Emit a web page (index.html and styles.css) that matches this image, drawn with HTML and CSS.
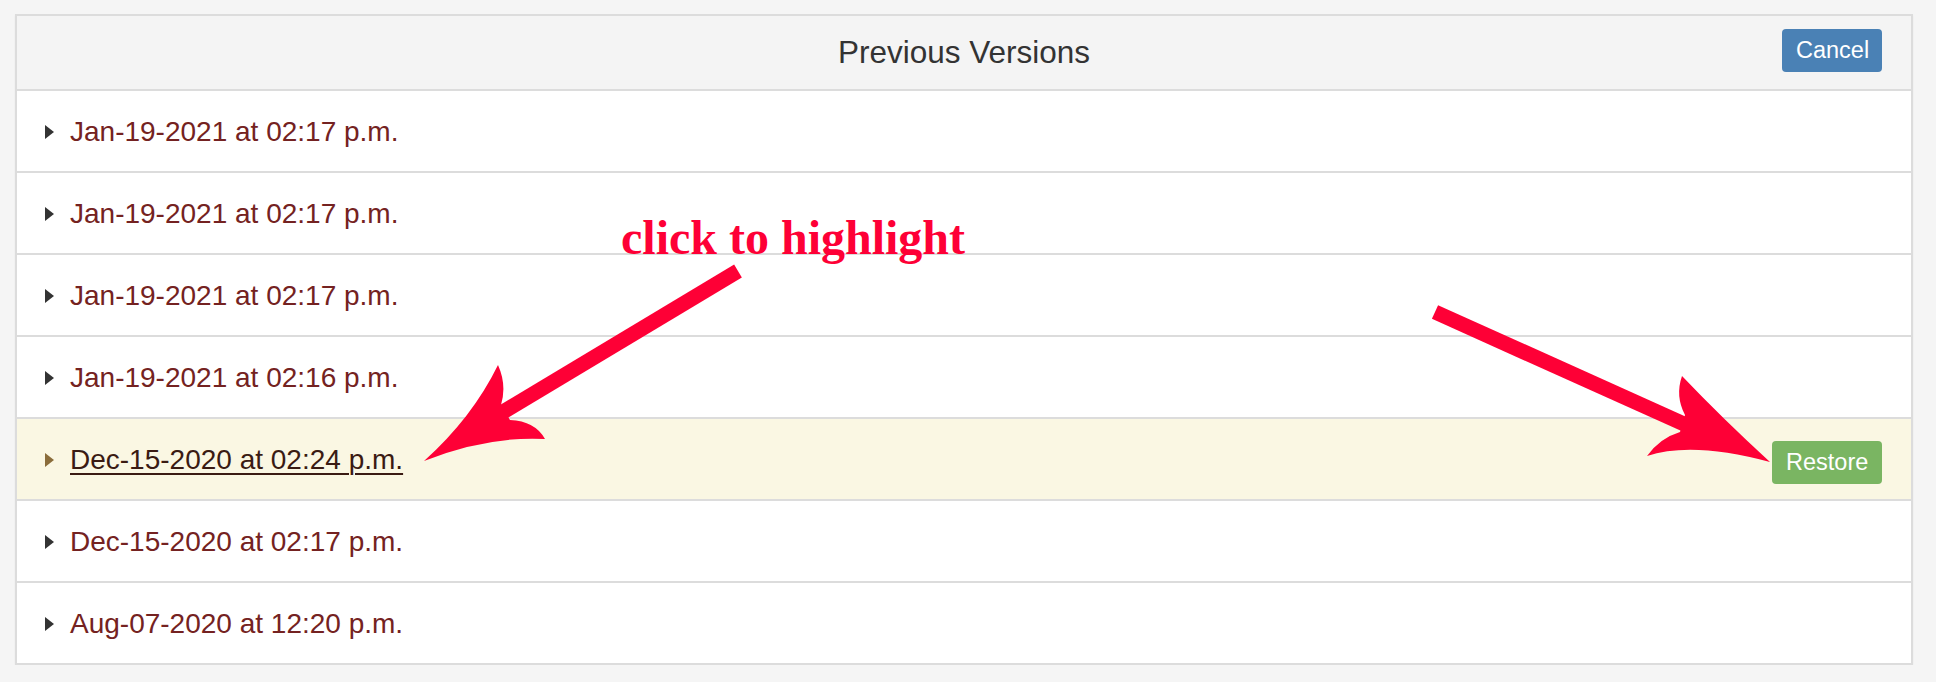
FILE: index.html
```html
<!DOCTYPE html>
<html lang="en">
  <head>
    <meta charset="UTF-8" />
    <title>Previous Versions</title>
    <link rel="stylesheet" href="styles.css">
  </head>
  <body>
    <!-- VERSIONS PANEL -->
    <div class="panel">
      <div class="panel-header">
        <h1>Previous Versions</h1>
        <button class="btn btn-cancel">Cancel</button>
      </div>
      <ul class="versions">
        <li class="version"><span class="caret"></span><a href="#">Jan-19-2021 at 02:17 p.m.</a></li>
        <li class="version"><span class="caret"></span><a href="#">Jan-19-2021 at 02:17 p.m.</a></li>
        <li class="version"><span class="caret"></span><a href="#">Jan-19-2021 at 02:17 p.m.</a></li>
        <li class="version"><span class="caret"></span><a href="#">Jan-19-2021 at 02:16 p.m.</a></li>
        <li class="version active">
          <span class="caret"></span><a href="#">Dec-15-2020 at 02:24 p.m.</a>
          <button class="btn btn-restore">Restore</button>
        </li>
        <li class="version"><span class="caret"></span><a href="#">Dec-15-2020 at 02:17 p.m.</a></li>
        <li class="version"><span class="caret"></span><a href="#">Aug-07-2020 at 12:20 p.m.</a></li>
      </ul>
    </div>

    <!-- ANNOTATIONS drawn over the panel -->
    <svg class="annotations" width="1936" height="682" viewBox="0 0 1936 682">
      <text class="note" x="621" y="254">click to highlight</text>
      <!-- left arrow -->
      <line x1="738" y1="271" x2="503" y2="412" stroke="#fe0036" stroke-width="15" />
      <path fill="#fe0036" d="M424 461 Q472 418 498 365 Q507 385 501 405 L510 420 Q535 421 545 439 Q486 436 424 461 Z" />
      <!-- right arrow -->
      <line x1="1435" y1="312" x2="1684" y2="424" stroke="#fe0036" stroke-width="15" />
      <path fill="#fe0036" d="M1770 462 Q1722 418 1682 376 Q1675 396 1685 415 L1680 432 Q1660 438 1647 456 Q1692 441 1770 462 Z" />
    </svg>
  </body>
</html>
```

FILE: styles.css
```css
/* Global */
* {
  box-sizing: border-box;
}
body {
  margin: 0;
  padding: 14px 23px 0 15px;
  background: #f5f5f5;
  font-family: "Liberation Sans", Arial, sans-serif;
  color: #333;
}

/* PANEL */
.panel {
  background: #fff;
  border: 2px solid #dcdcdc;
  box-shadow: 0 1px 2px rgba(0, 0, 0, 0.05);
}
.panel-header {
  position: relative;
  display: flex;
  align-items: center;
  justify-content: center;
  height: 75px;
  background: #f4f4f4;
  border-bottom: 2px solid #dcdcdc;
}
.panel-header h1 {
  margin: 0;
  font-size: 31.5px;
  font-weight: normal;
  color: #333;
}

/* BUTTONS */
.btn {
  border: none;
  border-radius: 4px;
  color: #fff;
  font-family: inherit;
  font-size: 23.5px;
  height: 43px;
  line-height: 43px;
  padding: 0 14px;
  cursor: pointer;
}
.btn-cancel {
  position: absolute;
  right: 29px;
  top: 13px;
  width: 100px;
  background: #4a81b5;
}
.btn-restore {
  margin-left: auto;
  margin-top: 6px;
  width: 110px;
  background: #7ab562;
}

/* VERSION LIST */
.versions {
  list-style: none;
  margin: 0;
  padding: 0;
}
.version {
  display: flex;
  align-items: center;
  height: 82px;
  padding: 0 29px 0 28px;
  border-bottom: 2px solid #dcdcdc;
}
.version:last-child {
  border-bottom: none;
  height: 80px;
}
.version a {
  font-size: 28px;
  color: #742221;
  text-decoration: none;
  margin-top: 2px;
}
.caret {
  width: 0;
  height: 0;
  border-left: 9px solid #333;
  border-top: 7.5px solid transparent;
  border-bottom: 7.5px solid transparent;
  margin: 2px 16px 0 0;
}
.version.active {
  background: #faf7e3;
}
.version.active .caret {
  border-left-color: #8a6d3b;
}
.version.active a {
  color: #3a1b13;
  text-decoration: underline;
  text-decoration-thickness: 2px;
  text-underline-offset: 4px;
}

/* ANNOTATIONS */
.annotations {
  position: absolute;
  left: 0;
  top: 0;
  pointer-events: none;
}
.note {
  font-family: "Liberation Serif", "Times New Roman", serif;
  font-weight: bold;
  font-size: 48px;
  fill: #fe0036;
}
```
